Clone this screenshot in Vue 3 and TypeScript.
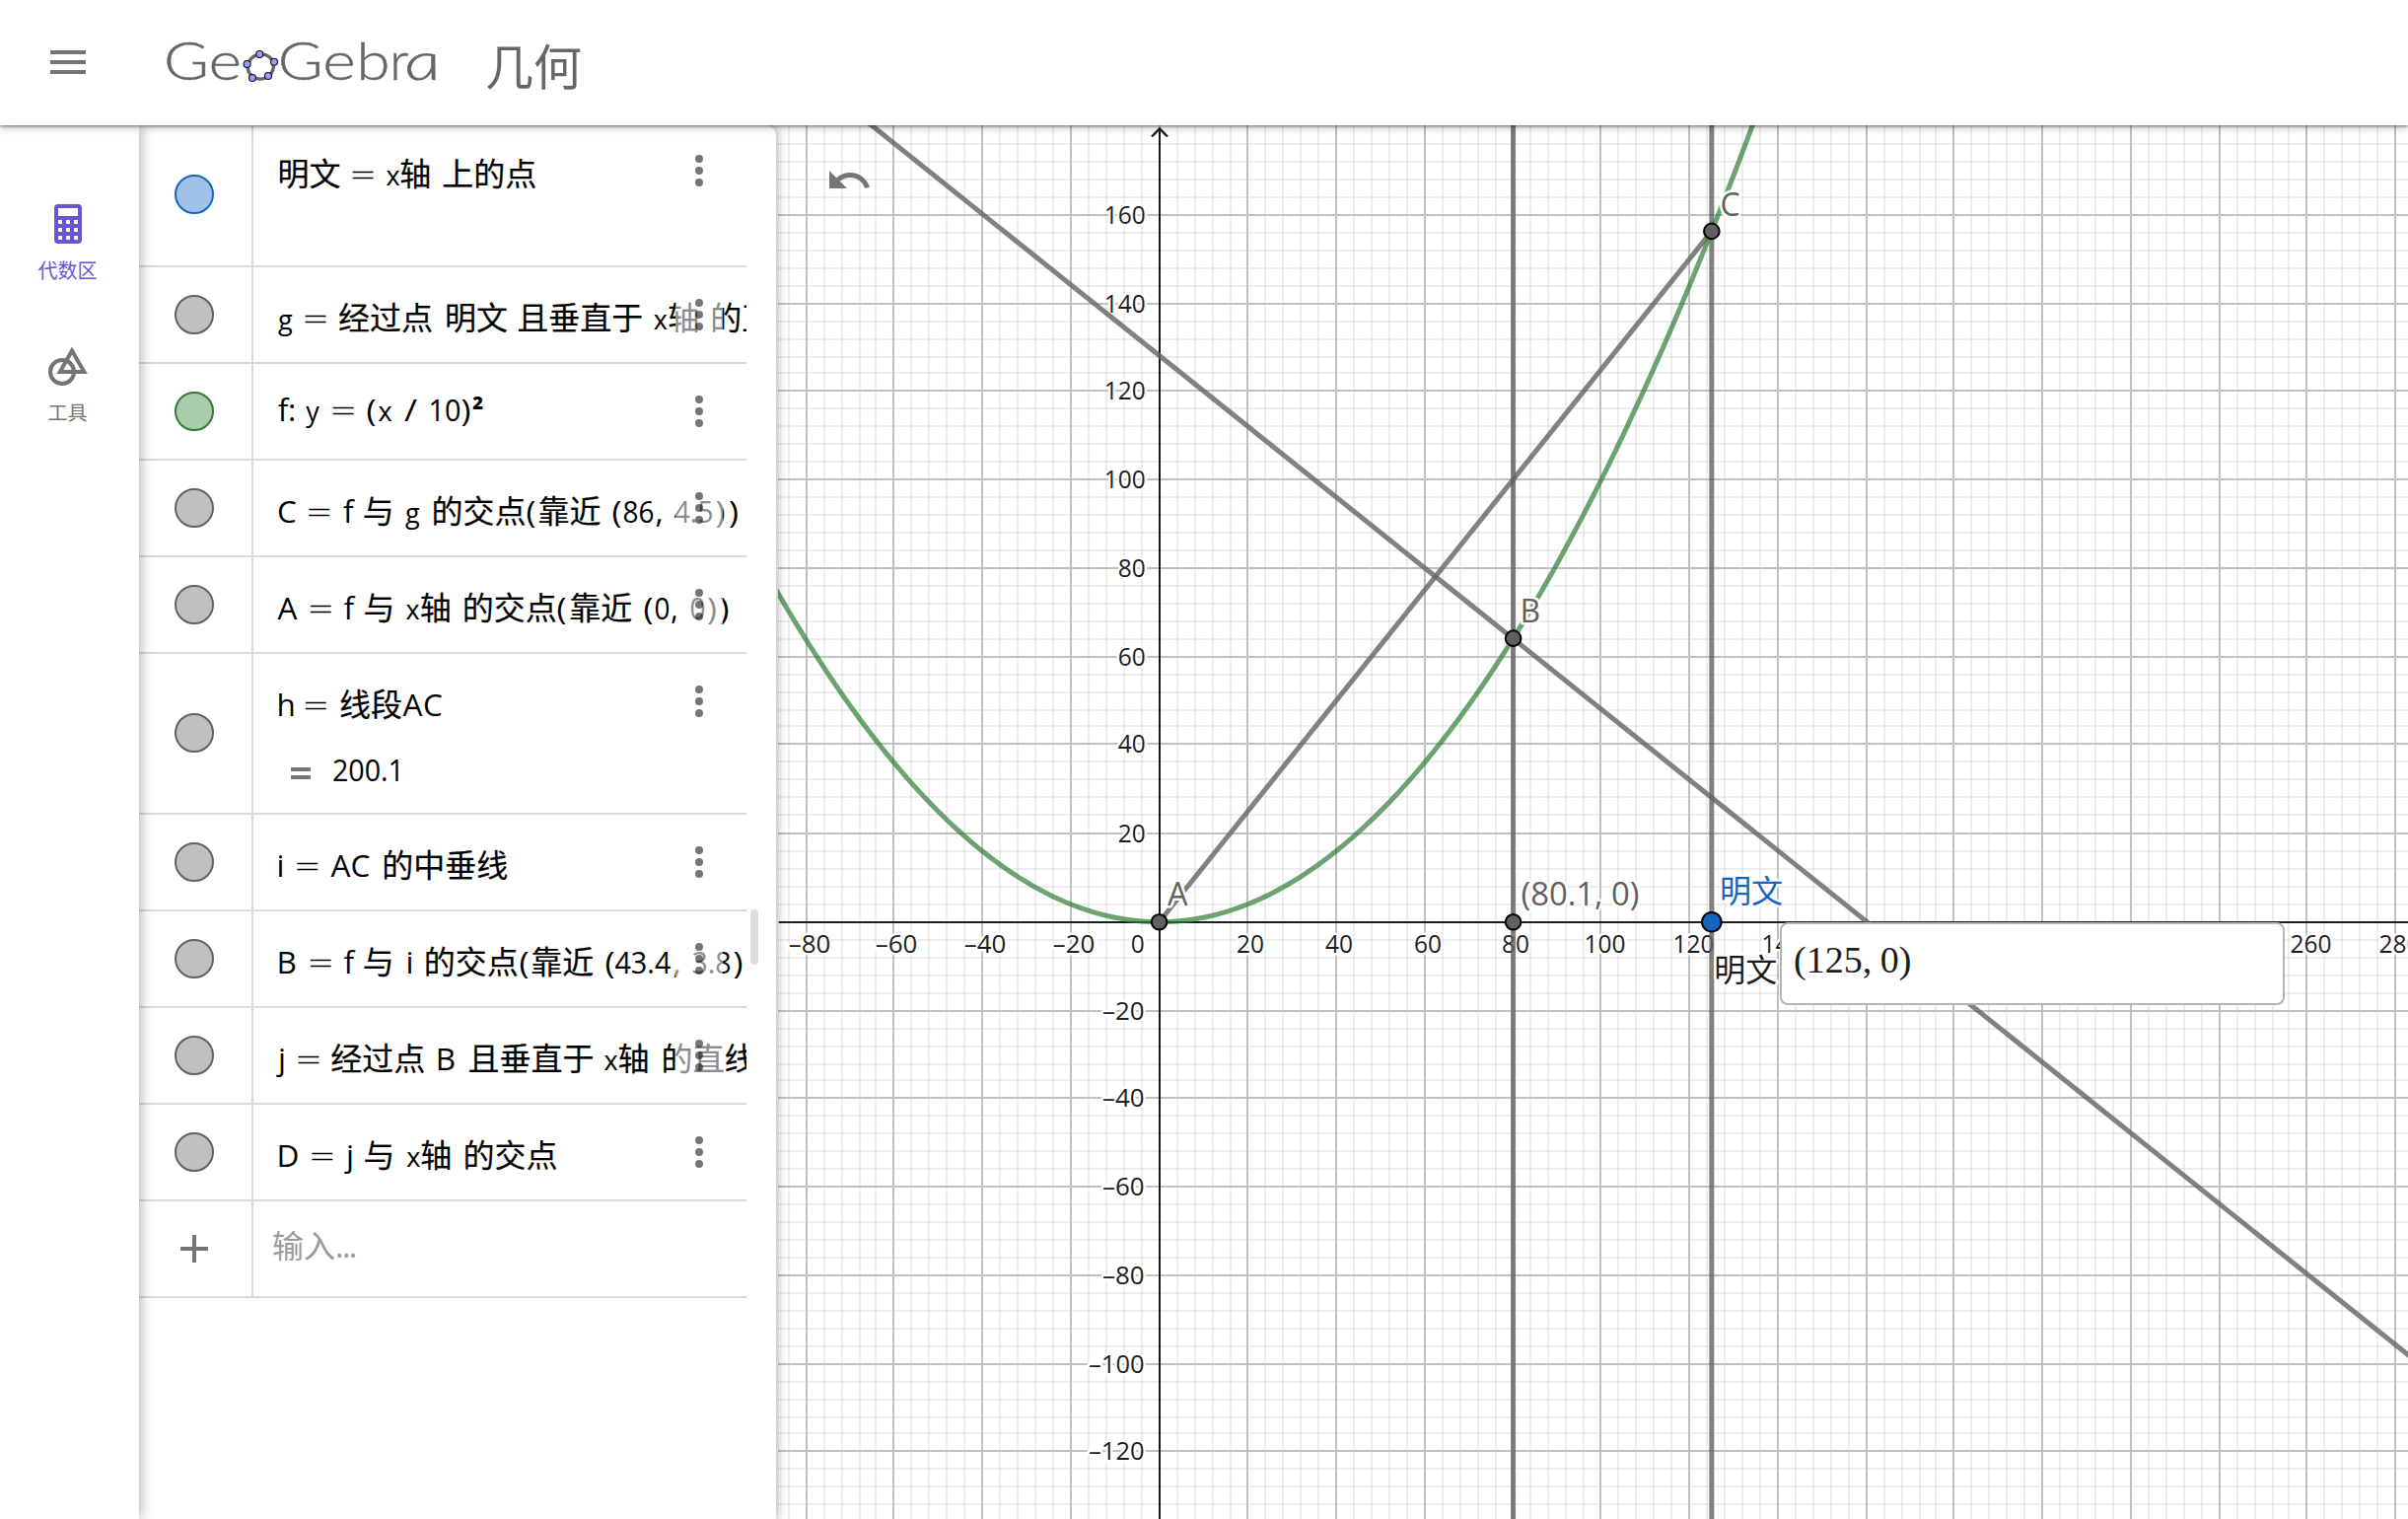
<script setup lang="ts">
interface Token {
  t: string
  x: number
  k?: 'cjk' | 'low' | 'eq' | 'sup' | 'var'
  w?: number
}
interface Row {
  height: number
  marble: number
  menu: number
  base: number
  color: string
  border: string
  tokens: Token[]
  value?: string
}

const GREY = { color: '#c0c0c0', border: '#616161' }
const BLUE = { color: '#a1c1e6', border: '#1565c0' }
const GREEN = { color: '#abcbad', border: '#2e7d32' }

const c = (t: string, x: number): Token => ({ t, x: x - 257.8, k: 'cjk' })
const l = (t: string, x: number, w?: number): Token => ({ t, x: x - 257.6, w })
const v = (t: string, x: number): Token => ({ t, x: x - 257.5, k: 'low' })
const eq = (x: number): Token => ({ t: '=', x: x - 259.4, k: 'eq', w: 25.5 })

const rows: Row[] = [
  { height: 144, marble: 70, menu: 46, base: 61, ...BLUE,
    tokens: [c('明文', 282.3), eq(357.7), v('x', 392), c('轴', 406), c('上的点', 449)] },
  { height: 98, marble: 48, menu: 48, base: 62.5, ...GREY,
    tokens: [v('g', 282.6), eq(309.7), c('经过点', 343.7), c('明文', 451.7), c('且垂直于', 525), v('x', 663.3), c('轴', 678), c('的直线', 721)] },
  { height: 98, marble: 48, menu: 48, base: 58, ...GREEN,
    tokens: [l('f', 282.3), l(':', 292.5), v('y', 310.7), eq(337.7), l('(', 372, 10), v('x', 384), l('/', 410.5, 13), l('10', 435, 33), l(')', 468, 10), { t: '²', x: 222, k: 'sup' }] },
  { height: 98, marble: 48, menu: 48, base: 62.5, ...GREY,
    tokens: [l('C', 281.5), eq(313.4), l('f', 348.5), c('与', 368.5), v('g', 411.4), c('的交点', 438.3), l('(', 534, 10), c('靠近', 546.3), l('(', 621, 10), l('86', 632, 32), l(',', 665), l('4.5', 684, 40), l(')', 726, 10), l(')', 739.5, 10)] },
  { height: 98, marble: 48, menu: 48, base: 62.5, ...GREY,
    tokens: [l('A', 282), eq(315), l('f', 349), c('与', 369.4), v('x', 412), c('轴', 426.6), c('的交点', 469.5), l('(', 565, 10), c('靠近', 578), l('(', 653, 10), l('0', 664, 16), l(',', 680.5), l('0', 700, 16), l(')', 717.5, 10), l(')', 730, 10)] },
  { height: 163, marble: 80, menu: 48, base: 62.5, ...GREY, value: '200.1',
    tokens: [l('h', 281), eq(310), c('线段', 344.7), l('A', 409), l('C', 429.5)] },
  { height: 98, marble: 48, menu: 48, base: 62.5, ...GREY,
    tokens: [l('i', 281), eq(301.3), l('A', 336), l('C', 356), c('的中垂线', 388)] },
  { height: 98, marble: 48, menu: 48, base: 62.5, ...GREY,
    tokens: [l('B', 281), eq(315), l('f', 349), c('与', 368.5), l('i', 412), c('的交点', 430.5), l('(', 527, 10), c('靠近', 539), l('(', 614, 10), l('43.4', 624, 57), l(',', 683), l('3.8', 702, 40), l(')', 744, 10), l(')', 757, 10)] },
  { height: 98, marble: 48, menu: 48, base: 62.5, ...GREY,
    tokens: [l('j', 282.5), eq(302.6), c('经过点', 336), l('B', 442.4), c('且垂直于', 475.2), v('x', 613), c('轴', 627.4), c('的直线', 671.3)] },
  { height: 98, marble: 48, menu: 48, base: 62.5, ...GREY,
    tokens: [l('D', 281), eq(316.5), l('j', 351.5), c('与', 369.4), v('x', 412.7), c('轴', 427), c('的交点', 470.4)] },
]

const logo = [
  { t: 'G', x: 166, w: 46 },
  { t: 'e', x: 211.5, w: 33.5 },
  { t: 'G', x: 281.7, w: 46 },
  { t: 'e', x: 327.2, w: 33.5 },
  { t: 'b', x: 361.5, w: 34 },
  { t: 'r', x: 395.3, w: 19 },
]

// Graph geometry, in window pixels
const S = 4.482
const OX = 1175.6
const OY = 934.7
const px = (x: number) => OX + x * S
const py = (y: number) => OY - y * S

const majorX = [818, 906, 996, 1086, 1176, 1265, 1355, 1445, 1534, 1623, 1713, 1803, 1893, 1981, 2071, 2161, 2251, 2339, 2429]
const majorY = [218, 308, 396, 486, 576, 666, 754, 845, 935, 1025, 1113, 1203, 1293, 1383, 1471]

function minors(m: number[], before: number[], after: number[]): number[] {
  const out = [...before]
  for (let i = 0; i < m.length - 1; i++) {
    const short = m[i + 1] - m[i] < 89
    const steps = short ? [18, 36, 54, 70] : [18, 36, 54, 72]
    for (const s of steps) out.push(m[i] + s)
  }
  return out.concat(after)
}
const minorX = minors(majorX, [800], [])
const minorY = minors(majorY, [146, 164, 182, 200], [1489, 1507, 1525])

const textWidth = (n: number) => String(Math.abs(n)).length * 14 + (n < 0 ? 14.6 : 0)
const label = (n: number) => (n < 0 ? '–' + -n : String(n))

const xTicks = majorX
  .map((x, i) => {
    const n = -80 + i * 20
    return { t: label(n), x: x + (n >= 100 ? 4.5 : 3) - textWidth(n) / 2, y: 966, w: textWidth(n), n }
  })
  .filter((d) => d.n !== 0)
xTicks.push({ t: '0', x: 1146.8, y: 966, w: 14, n: 0 })

const yTicks = majorY
  .map((y, i) => {
    const n = 160 - i * 20
    return { t: label(n), x: (n < 0 ? 1160.7 : 1161.7) - textWidth(n), y: y + 9, w: textWidth(n), n }
  })
  .filter((d) => d.n !== 0)

const ticks = xTicks.concat(yTicks)

let parabola = ''
for (let x = -88; x <= 144; x += 1) {
  parabola += (parabola ? 'L' : 'M') + px(x).toFixed(2) + ' ' + py((x / 10) ** 2).toFixed(2)
}
const bis = (x: number) => 128.125 - 0.8 * x
</script>

<template>
  <div class="app">
    <header class="header">
      <svg class="burger" width="36" height="24" viewBox="0 0 36 24"><path d="M0 2h36M0 12h36M0 22h36" stroke="#757575" stroke-width="4" /></svg>
      <svg class="logo" width="290" height="60" viewBox="165 32 290 60">
        <g class="logo-text">
          <text y="81"><tspan v-for="(g, i) in logo" :key="i" :x="g.x" :textLength="g.w" lengthAdjust="spacingAndGlyphs">{{ g.t }}</tspan></text>
          <text class="logo-a" transform="translate(412.5 81) skewX(10)" x="0" y="0" textLength="37" lengthAdjust="spacingAndGlyphs">a</text>
        </g>
        <ellipse cx="264.3" cy="67.5" rx="13.2" ry="12.4" fill="none" stroke="#666" stroke-width="3.4" transform="rotate(-25 264.3 67.5)" />
        <g fill="#99f" stroke="#111" stroke-width="1.1">
          <circle cx="263.3" cy="55" r="3.5" /><circle cx="278" cy="62.7" r="3.5" /><circle cx="272" cy="77" r="3.5" /><circle cx="256" cy="79" r="3.5" /><circle cx="250.6" cy="65" r="3.5" />
        </g>
      </svg>
      <div class="title">几何</div>
    </header>

    <div class="main">
      <nav class="side">
        <div class="tab active">
          <svg width="44" height="44" viewBox="47 205 44 44">
            <path fill="#6557d2" fill-rule="evenodd" d="M59 207h20a4 4 0 0 1 4 4v32a4 4 0 0 1-4 4H59a4 4 0 0 1-4-4v-32a4 4 0 0 1 4-4zM59 211v8h20v-8zM59 223v4h4v-4zM67 223v4h4v-4zM75 223v4h4v-4zM59 231v4h4v-4zM67 231v4h4v-4zM75 231v4h4v-4zM59 239v4h4v-4zM67 239v4h4v-4zM75 239v4h4v-4z" />
          </svg>
          <span>代数区</span>
        </div>
        <div class="tab">
          <svg width="44" height="44" viewBox="47 349 44 44" fill="none" stroke="#757575" stroke-width="4">
            <circle cx="63" cy="377" r="12" />
            <path d="M73 355.6L60.8 377h24.6z" />
          </svg>
          <span>工具</span>
        </div>
      </nav>

      <section class="panel">
        <div class="list">
          <div v-for="(r, i) in rows" :key="i" class="row" :style="{ height: r.height + 'px' }">
            <div class="marble-cell" :style="{ paddingTop: r.marble - 20 + 'px' }">
              <span class="marble" :style="{ background: r.color, borderColor: r.border }"></span>
            </div>
            <div class="formula">
              <svg class="expr" width="500" :height="r.height - 2">
                <text :y="r.base"><tspan v-for="(k, j) in r.tokens" :key="j" :x="k.x" :class="k.k" :textLength="k.w" lengthAdjust="spacingAndGlyphs">{{ k.t }}</tspan></text>
                <template v-if="r.value">
                  <path d="M38 117h20M38 125h20" stroke="#757575" stroke-width="4" />
                  <text x="80" y="129" textLength="73" lengthAdjust="spacingAndGlyphs">{{ r.value }}</text>
                </template>
              </svg>
              <div class="more" :style="{ top: r.menu - 24 + 'px' }">
                <svg width="48" height="48" viewBox="0 0 48 48" fill="#000" fill-opacity=".54"><circle cx="24" cy="12" r="4" /><circle cx="24" cy="24" r="4" /><circle cx="24" cy="36" r="4" /></svg>
              </div>
            </div>
          </div>
          <div class="row input-row">
            <div class="marble-cell plus"><svg width="28" height="28" viewBox="0 0 28 28"><path d="M14 0v28M0 14h28" stroke="#757575" stroke-width="4" /></svg></div>
            <div class="placeholder">输入<span>...</span></div>
          </div>
        </div>
        <div class="thumb"></div>
      </section>

      <section class="graph">
        <svg width="1653" height="1413" viewBox="789 127 1653 1413">
          <rect x="789" y="127" width="1653" height="1413" fill="#fff" />
          <g stroke="#c0c0c0" stroke-opacity=".29" stroke-width="2">
            <path v-for="x in minorX" :key="'a' + x" :d="`M${x} 127V1540`" />
            <path v-for="y in minorY" :key="'b' + y" :d="`M789 ${y}H2442`" />
          </g>
          <g stroke="#c0c0c0" stroke-width="2">
            <path v-for="x in majorX" :key="'c' + x" :d="`M${x} 127V1540`" />
            <path v-for="y in majorY" :key="'d' + y" :d="`M789 ${y}H2442`" />
          </g>
          <g fill="none" stroke="#1c1c1f" stroke-width="2">
            <path d="M790 935H2442M1176 131V1540" />
            <path d="M1168 138.5L1176 130.5L1184 138.5" stroke-width="2.4" />
          </g>
          <g class="ticks halo">
            <text v-for="(t, i) in ticks" :key="i" :x="t.x" :y="t.y" :textLength="t.w" lengthAdjust="spacingAndGlyphs">{{ t.t }}</text>
          </g>
          <g fill="none" stroke-width="5">
            <g stroke="#616161" stroke-opacity=".8">
              <path :d="`M${px(125)} 127V1540`" />
              <path :d="`M${px(80.1)} 127V1540`" />
              <path :d="`M${px(0)} ${py(0)}L${px(125)} ${py(156.25)}`" />
              <path :d="`M${px(-88)} ${py(bis(-88))}L${px(286)} ${py(bis(286))}`" />
            </g>
            <path :d="parabola" stroke="#2e7d32" stroke-opacity=".7" />
          </g>
          <g class="names halo">
            <text x="1184" y="918" textLength="20.5" lengthAdjust="spacingAndGlyphs">A</text>
            <text x="1541.5" y="631">B</text>
            <text x="1744.5" y="219">C</text>
            <text x="1542.5" y="918" textLength="120" lengthAdjust="spacingAndGlyphs">(80.1, 0)</text>
            <text x="1744" y="915" class="cjk" fill="#1565c0">明文</text>
            <text x="1738.3" y="995" class="cjk" fill="#1c1c1f">明文</text>
          </g>
          <g fill="#616161" stroke="#000" stroke-width="2">
            <circle :cx="px(0)" :cy="py(0)" r="7.8" />
            <circle :cx="px(80.1)" :cy="py(0)" r="7.8" />
            <circle :cx="px(80.1)" :cy="py(64.16)" r="7.8" />
            <circle :cx="px(125)" :cy="py(156.25)" r="7.8" />
            <circle :cx="px(125)" :cy="py(0)" r="9.8" fill="#1565c0" />
          </g>
          <path transform="translate(837 159) scale(2)" fill="#757575" d="M12.5 8c-2.65 0-5.05.99-6.9 2.6L2 7v9h9l-3.62-3.62c1.39-1.16 3.16-1.88 5.12-1.88 3.54 0 6.55 2.31 7.6 5.5l2.37-.78C21.08 11.03 17.15 8 12.5 8z" />
        </svg>
        <div class="answer">(125, 0)</div>
      </section>
    </div>
  </div>
</template>

<style>
body { margin: 0; background: #fff; overflow: hidden; }
</style>

<style scoped>
.app { width: 2442px; height: 1540px; overflow: hidden; display: flex; flex-direction: column; background: #fff; font-family: "Open Sans", "Noto Sans CJK SC", sans-serif; }
.header { height: 127px; flex: none; display: flex; align-items: flex-start; position: relative; z-index: 5; background: #fff; box-shadow: 0 1px 3px rgba(0, 0, 0, .5), 0 3px 8px rgba(0, 0, 0, .2); }
.burger { margin: 51px 0 0 51px; }
.logo { margin: 32px 0 0 78px; overflow: visible; }
.logo-text { font: 300 53px Lato, sans-serif; fill: #666; stroke: #666; stroke-width: .4px; }
.logo-a { font-style: italic; }
.title { margin: 30px 0 0 37px; font: 49px/70px "Noto Sans CJK SC", sans-serif; color: #666; }
.main { flex: 1; display: flex; min-height: 0; }
.side { width: 141px; flex: none; background: #fff; position: relative; z-index: 3; box-shadow: 2px 0 12px rgba(0, 0, 0, .3); padding-top: 78px; box-sizing: border-box; }
.tab { width: 137px; height: 144px; display: flex; flex-direction: column; align-items: center; color: #757575; font: 400 20px/28px "Noto Sans CJK SC", sans-serif; }
.tab span { margin-top: 11px; }
.tab.active { color: #6557d2; }
.panel { width: 646px; margin-right: 2px; flex: none; background: #fff; border-radius: 0 10px 0 0; position: relative; z-index: 2; box-shadow: 2px 0 10px rgba(0, 0, 0, .3); display: flex; }
.list { width: 616px; flex: none; }
.row { display: flex; box-sizing: border-box; border-bottom: 2px solid #dadada; overflow: hidden; }
.marble-cell { width: 116px; flex: none; box-sizing: border-box; border-right: 2px solid #dadada; padding-left: 36px; }
.marble { display: block; width: 40px; height: 40px; border: 2px solid; border-radius: 50%; box-sizing: border-box; }
.formula { position: relative; flex: 1; overflow: hidden; }
.expr { display: block; font: 31.5px "Open Sans", sans-serif; fill: #000; }
.expr .cjk { font: 32px "Noto Sans CJK SC", sans-serif; stroke: #000; stroke-width: .2px; }
.expr .low { font-size: 27px; }
.expr .eq { font-weight: 300; stroke: #000; stroke-width: .2px; }
.expr .sup { font-weight: 700; font-size: 30px; }
.more { position: absolute; left: 428px; width: 48px; height: 48px; background: rgba(255, 255, 255, .55); }
.more svg { display: block; }
.input-row { height: 98px; }
.plus { padding: 34px 0 0 42px; }
.placeholder { padding: 20px 0 0 19px; font: 400 32px/46px "Noto Sans CJK SC", sans-serif; color: #999; }
.placeholder span { font-family: "Open Sans", sans-serif; letter-spacing: -1.5px; }
.thumb { width: 8px; height: 56px; margin: 795px 0 0 4px; border-radius: 4px; background: #dadce0; }
.graph { flex: 1; position: relative; min-width: 0; overflow: hidden; }
.graph > svg { display: block; }
.halo text { paint-order: stroke; stroke: #fff; stroke-width: 5px; stroke-linejoin: round; }
.ticks { font: 25.5px "Open Sans", sans-serif; fill: #1c1c1f; }
.names { font: 32px "Open Sans", sans-serif; fill: #616161; }
.names .cjk { font-family: "Noto Sans CJK SC", sans-serif; }
.answer { position: absolute; left: 1016px; top: 808px; width: 512px; height: 84px; box-sizing: border-box; border: 2px solid #b3b3ba; border-radius: 8px; background: #fff; padding: 13px 0 0 12px; font: 38px/46px "Liberation Serif", serif; word-spacing: -1px; color: #1c1c1f; }
</style>
